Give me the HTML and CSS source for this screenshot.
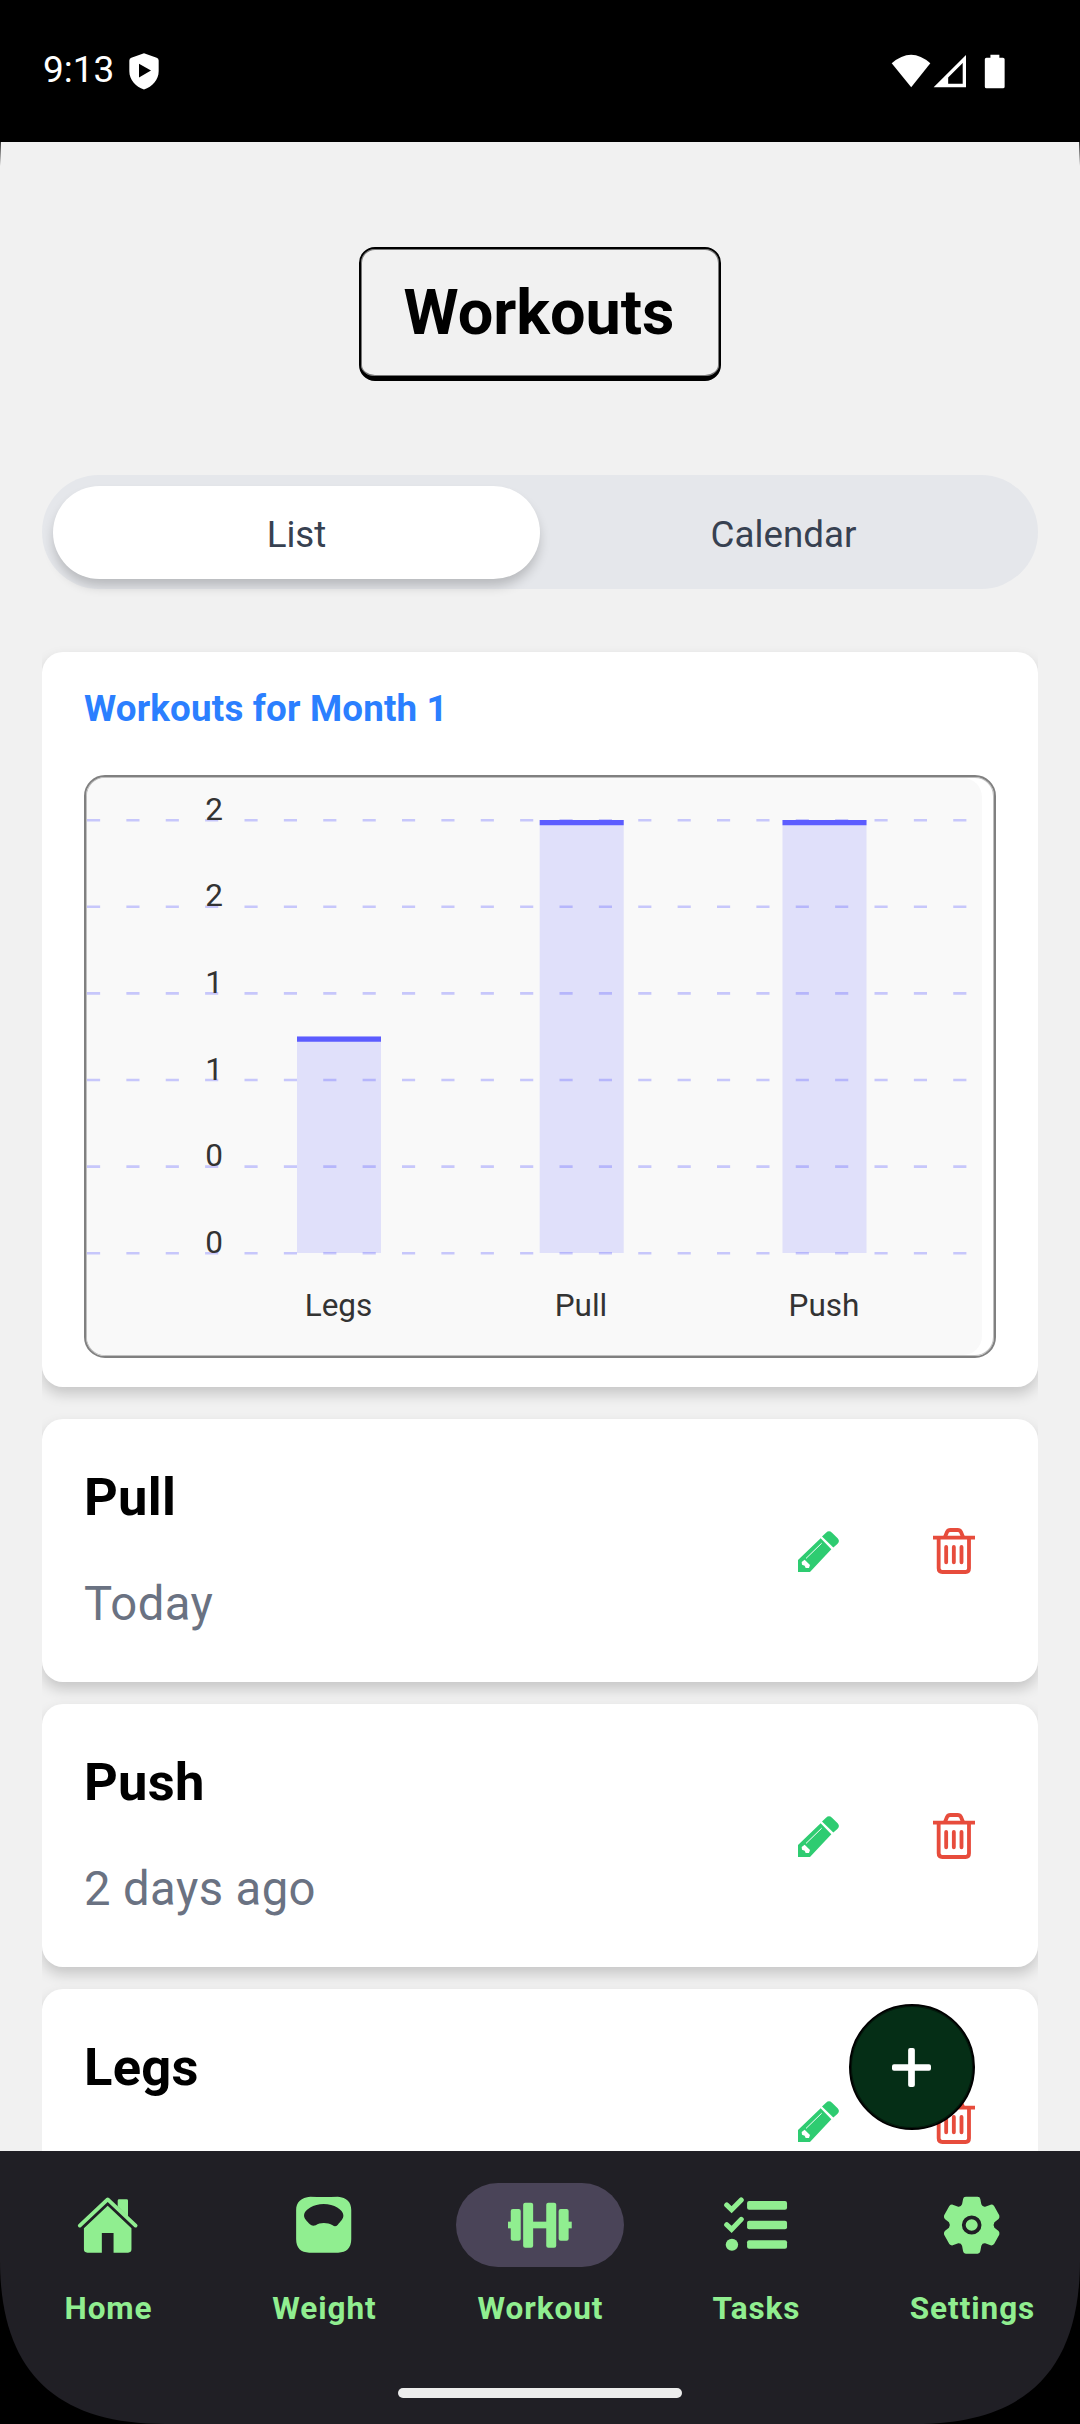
FILE: index.html
```html
<!DOCTYPE html>
<html lang="en">
<head>
<meta charset="utf-8">
<title>Workouts</title>
<link rel="stylesheet" href="styles.css">
</head>
<body>
<svg class="defs" width="0" height="0" aria-hidden="true">
  <symbol id="pencil" viewBox="0 0 123 124" preserveAspectRatio="none">
    <path fill="#2ecc71" d="M0 88L68 22L100 55L36 124H0ZM72 17L84 5Q93-4 102 5L119 22Q127 31 118 39L106 50Z"/>
    <path stroke="#fff" stroke-width="3" d="M24 83L71 37"/>
    <path fill="#fff" d="M11 94L20 87L36 103L33 112H23L20 105L12 102Z"/>
  </symbol>
  <symbol id="trash" viewBox="0 0 126 138" preserveAspectRatio="none">
    <g fill="none" stroke="#e74c3c" stroke-width="11.5">
      <path d="M0 29H126M17 30V121Q17 132 28 132H98Q108 132 108 121V30"/>
      <path d="M36 27L42 12Q45 6 52 6H74Q81 6 84 12L90 27"/>
      <path stroke-linecap="round" d="M39.500 57V103M62.500 57V103M85.500 57V103"/>
    </g>
  </symbol>
</svg>
<div class="screen">
  <header class="status">
    <span class="time">9:13</span>
    <svg class="shield" viewBox="388 158 90 110"><path fill="#fff" d="M433 158L471 172Q477 174 477 180V212C477 238 458 258 433 267C408 258 389 238 389 212V180Q389 174 395 172Z"/><path d="M418 190L454 210L418 231Z"/></svg>
    <svg class="signals" viewBox="273 160 344 106">
      <path fill="#fff" d="M273 188Q332 136 390 188L332 261Z"/>
      <path fill="#fff" fill-rule="evenodd" d="M400 261L498 163V261ZM488 187L444 231V250H488Z"/>
      <path fill="#fff" d="M572 162H599V171H610Q615 171 615 176V259Q615 264 610 264H560Q555 264 555 259V176Q555 171 560 171H572Z"/>
    </svg>
  </header>

  <main class="content">
    <h1 class="title">Workouts</h1>
    <div class="tabs">
      <div class="tab tab-active">List</div>
      <div class="tab">Calendar</div>
    </div>
    <div class="list">
      <section class="card chart-card">
        <h2 class="chart-title">Workouts for Month 1</h2>
        <div class="chart">
          <svg class="plot" viewBox="87 778 895 577">
            <g class="grid">
              <path d="M87 820.300H968M87 906.800H968M87 993.400H968M87 1080H968M87 1166.600H968M87 1253.200H968"/>
            </g>
            <g class="bars">
              <rect x="297" y="1036.500" width="84" height="216.500"/>
              <rect x="539.700" y="820" width="84" height="433"/>
              <rect x="782.500" y="820" width="84" height="433"/>
            </g>
            <g class="caps">
              <rect x="297" y="1036.500" width="84" height="5.250"/>
              <rect x="539.700" y="820" width="84" height="5.250"/>
              <rect x="782.500" y="820" width="84" height="5.250"/>
            </g>
            <g class="labels labels-y">
              <text x="223" y="819.500">2</text>
              <text x="223" y="906">2</text>
              <text x="223" y="993">1</text>
              <text x="223" y="1079.500">1</text>
              <text x="223" y="1166">0</text>
              <text x="223" y="1253">0</text>
            </g>
            <g class="labels labels-x">
              <text x="338.500" y="1316">Legs</text>
              <text x="581" y="1316">Pull</text>
              <text x="824" y="1316">Push</text>
            </g>
          </svg>
        </div>
      </section>

      <section class="card workout">
        <div class="info"><h3 class="name">Pull</h3><p class="when">Today</p></div>
        <div class="actions"><svg class="pencil"><use href="#pencil"/></svg><svg class="trash"><use href="#trash"/></svg></div>
      </section>
      <section class="card workout">
        <div class="info"><h3 class="name">Push</h3><p class="when">2 days ago</p></div>
        <div class="actions"><svg class="pencil"><use href="#pencil"/></svg><svg class="trash"><use href="#trash"/></svg></div>
      </section>
      <section class="card workout">
        <div class="info"><h3 class="name">Legs</h3></div>
        <div class="actions"><svg class="pencil"><use href="#pencil"/></svg><svg class="trash"><use href="#trash"/></svg></div>
      </section>
    </div>
    <button class="fab" aria-label="Add"><svg viewBox="0 0 116 116"><rect x="48" y="0" width="20" height="116" rx="6" fill="#fff"/><rect x="0" y="48" width="116" height="20" rx="6" fill="#fff"/></svg></button>
  </main>

  <nav class="nav">
    <div class="nav-items">
      <div class="nav-item">
        <div class="nav-icon"><svg viewBox="220 163 184 180" preserveAspectRatio="none">
          <path fill="none" stroke="currentColor" stroke-width="11" stroke-linecap="round" stroke-linejoin="round" d="M231 255L312 176L393 255"/>
          <path fill="currentColor" d="M341 197V180Q341 176 345 176H367Q371 176 371 180V228ZM312 195L381 263V326Q381 336 371 336H329V277H295V336H253Q243 336 243 326V263Z"/>
        </svg></div><span>Home</span>
      </div>
      <div class="nav-item">
        <div class="nav-icon"><svg viewBox="847 163 184 180" preserveAspectRatio="none">
          <path fill="currentColor" fill-rule="evenodd" d="M900 168Q939 170 980 168C1006 170 1019 184 1019 208V296C1019 322 1005 336 981 336H897C873 336 859 322 859 296V208C859 184 874 170 900 168ZM882 223C883 207 910 190 939 190C969 190 995 207 996 223C997 235 987 243 980 252Q973 260 965 254C950 245 928 245 916 254Q905 258 899 251C891 242 881 233 882 223Z"/>
        </svg></div><span>Weight</span>
      </div>
      <div class="nav-item">
        <div class="nav-icon nav-icon-active"><svg viewBox="1476 163 184 180" preserveAspectRatio="none">
          <g fill="currentColor"><rect x="1475" y="243" width="12" height="20"/><rect x="1649" y="243" width="12" height="20"/><rect x="1545" y="243" width="46" height="20"/>
          <rect x="1484" y="205" width="29" height="95" rx="6"/><rect x="1520" y="186" width="29" height="135" rx="6"/><rect x="1587" y="186" width="29" height="135" rx="6"/><rect x="1623" y="205" width="29" height="95" rx="6"/></g>
        </svg></div><span>Workout</span>
      </div>
      <div class="nav-item">
        <div class="nav-icon"><svg viewBox="534 163 184 180" preserveAspectRatio="none">
          <g fill="currentColor"><rect x="601" y="181" width="116" height="26" rx="6"/><rect x="601" y="240" width="116" height="26" rx="6"/><rect x="601" y="299" width="116" height="25" rx="6"/><circle cx="557" cy="312" r="18"/></g>
          <path fill="none" stroke="currentColor" stroke-width="15" stroke-linecap="round" d="M542 193L556 207L584 178M542 252L556 266L584 236"/>
        </svg></div><span>Tasks</span>
      </div>
      <div class="nav-item">
        <div class="nav-icon"><svg viewBox="1161 163 184 180" preserveAspectRatio="none">
          <path fill="currentColor" d="M1236 168H1270Q1277 168 1278 175L1281 191Q1284 199 1292 198L1308 192Q1314 191 1318 196L1333 224Q1335 230 1331 235L1319 245Q1314 253 1319 261L1331 271Q1335 276 1333 282L1318 310Q1314 315 1308 314L1292 308Q1284 307 1281 315L1278 332Q1277 339 1270 339H1236Q1229 339 1228 332L1225 315Q1222 307 1214 308L1198 314Q1192 315 1188 310L1173 282Q1171 276 1175 271L1187 261Q1192 253 1187 245L1175 235Q1171 230 1173 224L1188 196Q1192 191 1198 192L1214 198Q1222 199 1225 191L1228 175Q1229 168 1236 168Z"/>
          <circle cx="1253" cy="253" r="23" fill="none" stroke="#201f25" stroke-width="11"/>
        </svg></div><span>Settings</span>
      </div>
    </div>
    <div class="handle"></div>
  </nav>
</div>
</body>
</html>
```
FILE: styles.css
```css
* { box-sizing: border-box; }
body { margin: 0; background: #000; font-family: Roboto, "Noto Sans", sans-serif; }
h1, h2, h3, p { margin: 0; }
svg { display: block; flex: none; }
.defs { position: absolute; }

.screen { width: 1080px; height: 2424px; display: flex; flex-direction: column; overflow: hidden; }

.status { height: 142px; flex: none; display: flex; align-items: center; padding: 0 74px 0 43px; color: #fff; }
.time { font-size: 37px; line-height: 44px; letter-spacing: 0; margin-top: -2px; width: 86px; }
.shield { width: 30px; height: 37px; }
.signals { width: 115px; height: 35px; margin-left: auto; }

.content {
  flex: 1; min-height: 0; overflow: hidden; position: relative;
  display: flex; flex-direction: column; align-items: center;
  padding: 105px 42px 0;
  background:
    linear-gradient(#333, #f1f1f1) 0 0 / 1px 24px no-repeat,
    linear-gradient(#333, #f1f1f1) 100% 0 / 1px 24px no-repeat,
    #f1f1f1;
}
.title {
  width: 362px; height: 134px; flex: none; text-align: center;
  padding-right: 2px;
  font-size: 63px; line-height: 128px; font-weight: 700; color: #000;
  border: 2px solid #000; border-bottom-width: 5px; border-radius: 16px;
  box-shadow: inset 0 0 0 1px rgba(0, 0, 0, 0.5);
}
.tabs {
  flex: none; width: 100%; height: 114px; margin-top: 94px; padding: 11px;
  display: flex; border-radius: 57px; background: #e5e7eb;
}
.tab {
  flex: 1; height: 93px; border-radius: 47px;
  font-size: 36.75px; line-height: 97px; text-align: center; color: #374151;
}
.tab-active { background: #fff; box-shadow: 0 8px 12px -1px rgba(0, 0, 0, 0.2); }

.list { width: 100%; margin-top: 53px; padding-top: 10px; overflow: hidden; flex: none; display: flex; flex-direction: column; gap: 22.5px; }
.card { background: #fff; border-radius: 21px; box-shadow: 0 7px 14px rgba(0, 0, 0, 0.18); flex: none; }
.chart-card { height: 735px; padding: 0 42px; margin-bottom: 9.5px; }
.chart-title { font-size: 36.75px; line-height: 43px; letter-spacing: 0.17px; padding-top: 35px; height: 123px; font-weight: 700; color: #2b7fff; }
.chart { width: 912px; height: 583px; padding: 1px; border: 2px solid #808080; border-radius: 21px; overflow: hidden; box-shadow: inset 0 0 0 1px rgba(128, 128, 128, 0.5); }
.plot { width: 895px; height: 577px; background: #f9f9f9; border-radius: 19px; }
.grid { fill: none; stroke: rgba(92, 92, 255, 0.32); stroke-width: 2.6; stroke-dasharray: 13.125 26.25; }
.bars { fill: rgba(92, 92, 255, 0.16); }
.caps { fill: #5c5cff; }
.labels { font-size: 31.5px; fill: #333; }
.labels-y { text-anchor: end; }
.labels-x { text-anchor: middle; }

.workout { height: 262.5px; padding: 0 63px 0 42px; display: flex; justify-content: space-between; }
.info { padding-top: 47px; }
.name { font-size: 52.5px; line-height: 62px; letter-spacing: 0.25px; font-weight: 700; color: #000; }
.when { font-size: 47.25px; line-height: 56px; letter-spacing: 0.4px; margin-top: 48px; color: #6a7282; }
.actions { display: flex; gap: 94px; padding-top: 109px; }
.pencil { width: 41px; height: 41px; margin-top: 3px; }
.trash { width: 42px; height: 46px; }

.fab {
  position: absolute; left: 849px; top: 1862px; width: 126px; height: 126px; padding: 0 1px 0 0;
  display: flex; align-items: center; justify-content: center;
  background: #052e16; border: 2px solid #000; border-radius: 50%;
  box-shadow: inset 0 0 0 1px rgba(0, 0, 0, 0.5);
}
.fab svg { width: 39px; height: 39px; }

.nav {
  height: 273px; flex: none; background: #201f25; color: #90ee90;
  display: flex; flex-direction: column; align-items: center; justify-content: space-between; padding: 32px 0 26px;
  clip-path: path("M0 0H1080V109C1080 219 1026 273 915 273H165C54 273 0 219 0 109Z");
}
.nav-items { display: flex; width: 100%; }
.nav-item { flex: 1; display: flex; flex-direction: column; align-items: center; font-size: 31.5px; line-height: 42px; font-weight: 700; letter-spacing: 0.95px; }
.nav-item span { padding-left: 1px; }
.nav-icon { width: 168px; height: 84px; border-radius: 42px; display: flex; align-items: center; justify-content: center; padding-bottom: 1px; margin-bottom: 21px; }
.nav-icon svg { width: 63.4px; height: 60px; }
.nav-icon-active { background: #4a4458; }
.handle { width: 284px; height: 10px; border-radius: 5px; background: #ececec; }
```
